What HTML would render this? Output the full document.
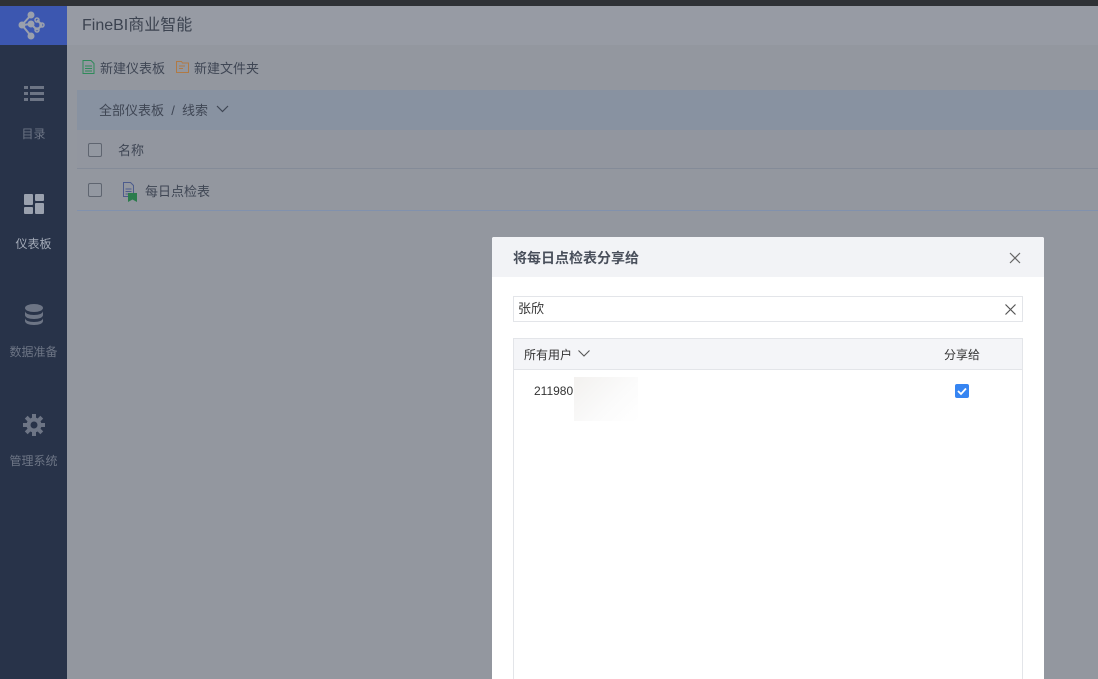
<!DOCTYPE html>
<html><head><meta charset="utf-8"><style>
*{margin:0;padding:0;box-sizing:border-box}
body{width:1098px;height:679px;overflow:hidden;background:#93979f;font-family:"Liberation Sans","Noto Sans CJK SC",sans-serif;position:relative}
.abs{position:absolute}
.topbar{left:0;top:0;width:1098px;height:6px;background:#2f3236}
.side{left:0;top:6px;width:67px;height:673px;background:#283349}
.logo{left:0;top:6px;width:67px;height:39px;background:#3c57b0}
.hdr{left:67px;top:6px;width:1031px;height:39px;background:#979ba4;color:#3c4350;font-size:16px;line-height:39px;padding-left:15px}
.navitem{width:67px;text-align:center;font-size:12px;color:#6d7585}
.t{font-size:13px;color:#3f4654}
.cb{width:14px;height:14px;border:1px solid #5f6570;border-radius:2px;background:#9398a1}
</style></head><body>
<div class="abs topbar"></div>
<div class="abs side"></div>
<div class="abs logo"><svg style="display:block" width="67" height="39" viewBox="0 0 67 39"><g fill="#9aa0ad" stroke="#9aa0ad" stroke-width="2"><line x1="31" y1="9" x2="22" y2="19"/><line x1="22" y1="19" x2="31" y2="30"/><line x1="22" y1="19" x2="31" y2="18"/><line x1="31" y1="18" x2="37" y2="24"/><line x1="37" y1="24" x2="42" y2="19"/><line x1="42" y1="19" x2="37" y2="14"/><circle cx="31" cy="9" r="2.5"/><circle cx="22" cy="19" r="2.5"/><circle cx="31" cy="30" r="2.5"/><circle cx="31" cy="18" r="2.5"/></g><g fill="none" stroke="#9aa0ad" stroke-width="1.5"><circle cx="37" cy="24" r="2"/><circle cx="42" cy="19" r="2"/><circle cx="37" cy="14" r="2"/></g></svg></div>
<div class="abs hdr">FineBI商业智能</div>

<div class="abs navitem" style="left:0;top:85px"><svg width="20" height="18" viewBox="0 0 20 18"><g fill="#6d7585"><rect x="0" y="1" width="4" height="3"/><rect x="6" y="1" width="14" height="3"/><rect x="0" y="7" width="4" height="3"/><rect x="6" y="7" width="14" height="3"/><rect x="0" y="13" width="4" height="3"/><rect x="6" y="13" width="14" height="3"/></g></svg><div style="margin-top:19px">目录</div></div>
<div class="abs navitem" style="left:0;top:194px;color:#a4abb8"><svg width="20" height="20" viewBox="0 0 20 20"><g fill="#9aa1ae"><rect x="0" y="0" width="9" height="11" rx="1"/><rect x="11" y="0" width="9" height="7" rx="1"/><rect x="0" y="13" width="9" height="7" rx="1"/><rect x="11" y="9" width="9" height="11" rx="1"/></g></svg><div style="margin-top:18px">仪表板</div></div>
<div class="abs navitem" style="left:0;top:304px"><svg width="20" height="22" viewBox="0 0 20 22"><g fill="#6d7585"><ellipse cx="10" cy="4" rx="9" ry="4"/><path d="M1 7c0 2.5 4 4 9 4s9-1.5 9-4v4c0 2.5-4 4-9 4s-9-1.5-9-4z"/><path d="M1 14c0 2.5 4 4 9 4s9-1.5 9-4v3c0 2.5-4 4-9 4s-9-1.5-9-4z"/></g></svg><div style="margin-top:14px">数据准备</div></div>
<div class="abs navitem" style="left:0;top:414px"><svg width="22" height="22" viewBox="0 0 22 22"><g fill="#6d7585"><circle cx="11" cy="11" r="7.5"/><g><rect x="9" y="0" width="4" height="5"/><rect x="9" y="17" width="4" height="5"/><rect x="0" y="9" width="5" height="4"/><rect x="17" y="9" width="5" height="4"/><rect x="9" y="0" width="4" height="5" transform="rotate(45 11 11)"/><rect x="9" y="17" width="4" height="5" transform="rotate(45 11 11)"/><rect x="0" y="9" width="5" height="4" transform="rotate(45 11 11)"/><rect x="17" y="9" width="5" height="4" transform="rotate(45 11 11)"/></g></g><circle cx="11" cy="11" r="3.5" fill="#283349"/></svg><div style="margin-top:13px">管理系统</div></div>

<div class="abs" style="left:82px;top:60px"><svg width="13" height="14" viewBox="0 0 13 14"><path d="M1 .5h8l3 3v10H1z" fill="none" stroke="#2f8a5a"/><path d="M3 6h7M3 8.5h7M3 11h7" stroke="#2f8a5a"/></svg></div>
<div class="abs t" style="left:100px;top:58px">新建仪表板</div>
<div class="abs" style="left:176px;top:60px"><svg width="14" height="13" viewBox="0 0 14 13"><path d="M.5 1.5h5l1 1.5h6v9.5H.5z" fill="none" stroke="#b07a45"/><path d="M3 6h6M3 8.5h4" stroke="#b07a45"/></svg></div>
<div class="abs t" style="left:194px;top:58px">新建文件夹</div>

<div class="abs" style="left:77px;top:90px;width:1021px;height:40px;background:#8892a1"></div>
<div class="abs t" style="left:99px;top:100px;white-space:nowrap">全部仪表板 &nbsp;/ &nbsp;线索<svg style="margin-left:8px;vertical-align:2px" width="13" height="8" viewBox="0 0 13 8"><path d="M1 1l5.5 5.5L12 1" fill="none" stroke="#3f4654" stroke-width="1.2"/></svg></div>
<div class="abs" style="left:77px;top:130px;width:1021px;height:39px;background:#92969f;border-bottom:1px solid #848b98"></div>
<div class="abs cb" style="left:88px;top:143px"></div>
<div class="abs t" style="left:118px;top:140px">名称</div>
<div class="abs" style="left:77px;top:170px;width:1021px;height:41px;border-bottom:1px solid #8191ad"></div>
<div class="abs cb" style="left:88px;top:183px"></div>
<div class="abs" style="left:123px;top:182px"><svg width="15" height="20" viewBox="0 0 15 20"><path d="M.5 .5h7l3 3v11H.5z" fill="none" stroke="#4d5c8c"/><path d="M2.5 7h6M2.5 9.5h6M2.5 12h6" stroke="#4d5c8c"/><path d="M5 11h9v9l-4.5-2.5L5 20z" fill="#2b7c4c"/></svg></div>
<div class="abs t" style="left:145px;top:181px">每日点检表</div>

<div class="abs" style="left:492px;top:237px;width:552px;height:442px;background:#fff;border-radius:2px 2px 0 0;overflow:hidden">
  <div style="height:40px;background:#f2f3f6;font-size:14px;font-weight:bold;color:#4a505c;line-height:42px;padding-left:21px">将每日点检表分享给</div>
  <svg class="abs" style="left:517px;top:15px" width="12" height="12" viewBox="0 0 12 12"><path d="M1 1l10 10M11 1L1 11" stroke="#666" stroke-width="1.2"/></svg>
  <div class="abs" style="left:21px;top:59px;width:510px;height:26px;border:1px solid #e3e5e9;font-size:13px;color:#333;line-height:24px;padding-left:4px">张欣</div>
  <svg class="abs" style="left:513px;top:67px" width="11" height="11" viewBox="0 0 11 11"><path d="M.5.5l10 10M10.5.5l-10 10" stroke="#555" stroke-width="1.2"/></svg>
  <div class="abs" style="left:21px;top:101px;width:510px;height:360px;border:1px solid #e3e5e9"></div>
  <div class="abs" style="left:22px;top:102px;width:508px;height:31px;background:#f4f5f8;border-bottom:1px solid #e3e5e9"></div>
  <div class="abs" style="left:32px;top:109px;font-size:12px;color:#333">所有用户</div>
  <svg class="abs" style="left:86px;top:113px" width="12" height="7" viewBox="0 0 12 7"><path d="M.5.5L6 6 11.5.5" fill="none" stroke="#555" stroke-width="1.1"/></svg>
  <div class="abs" style="left:452px;top:109px;font-size:12px;color:#333">分享给</div>
  <div class="abs" style="left:42px;top:147px;font-size:12px;color:#333">211980</div>
  <div class="abs" style="left:82px;top:140px;width:64px;height:44px;background:linear-gradient(135deg,#f3f1ef,#fbfbfb 60%,#fff)"></div>
  <div class="abs" style="left:463px;top:147px;width:14px;height:14px;background:#3685f2;border-radius:2px"><svg width="14" height="14" viewBox="0 0 14 14"><path d="M3 7l3 3 5-5.5" fill="none" stroke="#fff" stroke-width="1.8"/></svg></div>
</div>
</body></html>
